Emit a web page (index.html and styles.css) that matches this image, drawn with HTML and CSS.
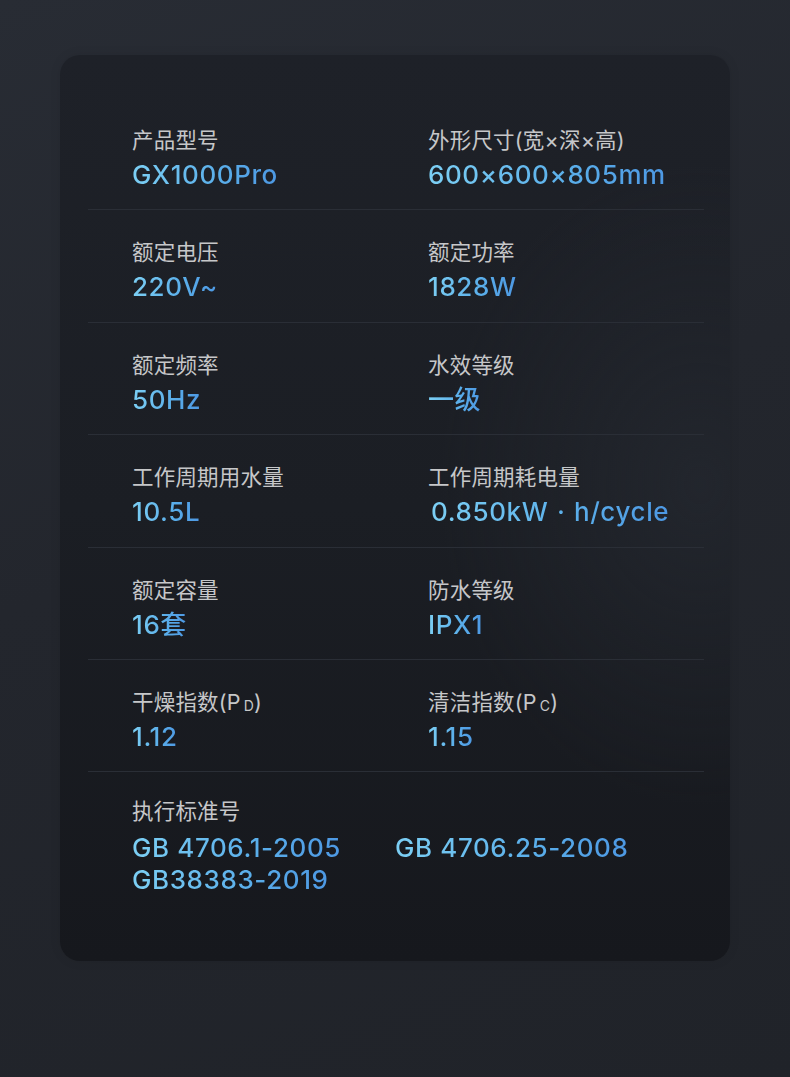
FILE: index.html
```html
<!DOCTYPE html>
<html lang="zh-CN">
<head>
<meta charset="utf-8">
<title>产品参数</title>
<link rel="stylesheet" href="styles.css">
</head>
<body>
<div class="page">
  <section class="card">
    <div class="row">
      <div class="cell"><div class="label">产品型号</div><div class="value"><span>GX1000Pro</span></div></div>
      <div class="cell"><div class="label">外形尺寸(宽×深×高)</div><div class="value"><span>600×600×805mm</span></div></div>
    </div>
    <div class="row">
      <div class="cell"><div class="label">额定电压</div><div class="value"><span>220V~</span></div></div>
      <div class="cell"><div class="label">额定功率</div><div class="value"><span>1828W</span></div></div>
    </div>
    <div class="row">
      <div class="cell"><div class="label">额定频率</div><div class="value"><span>50Hz</span></div></div>
      <div class="cell"><div class="label">水效等级</div><div class="value"><span>一级</span></div></div>
    </div>
    <div class="row">
      <div class="cell"><div class="label">工作周期用水量</div><div class="value"><span>10.5L</span></div></div>
      <div class="cell"><div class="label">工作周期耗电量</div><div class="value"><span class="indent">0.850kW · h/cycle</span></div></div>
    </div>
    <div class="row">
      <div class="cell"><div class="label">额定容量</div><div class="value"><span>16套</span></div></div>
      <div class="cell"><div class="label">防水等级</div><div class="value"><span>IPX1</span></div></div>
    </div>
    <div class="row">
      <div class="cell"><div class="label">干燥指数(P<small class="sub">D</small>)</div><div class="value"><span>1.12</span></div></div>
      <div class="cell"><div class="label">清洁指数(P<small class="sub">C</small>)</div><div class="value"><span>1.15</span></div></div>
    </div>
    <div class="row last">
      <div class="cell wide">
        <div class="label">执行标准号</div>
        <div class="standards">
          <div class="value"><span>GB 4706.1-2005</span></div>
          <div class="value"><span>GB 4706.25-2008</span></div>
          <div class="value"><span>GB38383-2019</span></div>
        </div>
      </div>
    </div>
  </section>
</div>
</body>
</html>
```

FILE: styles.css
```css
* { box-sizing: border-box; }
html, body { margin: 0; padding: 0; }
body {
  width: 790px;
  height: 1077px;
  overflow: hidden;
  background: linear-gradient(160deg, #282c34 0%, #23262d 45%, #202329 100%);
  font-family: "Inter", "Noto Sans CJK SC", sans-serif;
}
.page {
  padding: 55px 60px 0;
}
.card {
  width: 670px;
  border-radius: 20px;
  background:
    radial-gradient(ellipse 260px 320px at 640px 430px, rgba(40,44,52,0.55), rgba(40,44,52,0) 100%),
    linear-gradient(180deg, #1e2128 0%, #1b1e24 50%, #16181d 100%);
  padding: 43px 26px 0 28px;
  box-shadow: 0 0 12px rgba(0,0,0,0.08);
}
.row {
  display: grid;
  grid-template-columns: 296px 1fr;
  padding: 27px 0 16.4px 44px;
  border-bottom: 1px solid #2a2e36;
}
.row.last {
  border-bottom: none;
  padding: 24px 0 65px 44px;
  display: block;
}
.label {
  font-family: "Inter", "Noto Sans CJK SC", sans-serif;
  font-size: 21.5px;
  line-height: 30px;
  height: 30px;
  color: #c6c7c9;
  letter-spacing: 0.2px;
}
.sub {
  font-size: 14px;
  line-height: 0;
  margin-left: 3px;
  vertical-align: -1px;
}
.value {
  font-family: "Inter", "Noto Sans CJK SC", sans-serif;
  font-size: 26px;
  font-weight: 450;
  line-height: 36px;
  margin-top: 2px;
  letter-spacing: 0.6px;
}
.value span {
  display: inline-block;
  background: linear-gradient(90deg, #7ccff4 0%, #5aaeea 60%, #4d98e3 100%);
  -webkit-background-clip: text;
  background-clip: text;
  color: transparent;
}
.value span.indent { margin-left: 3px; word-spacing: 1px; }
.standards {
  display: grid;
  grid-template-columns: 263px 1fr;
  margin-top: 6px;
}
.standards .value { line-height: 32px; margin-top: 0; }
```
